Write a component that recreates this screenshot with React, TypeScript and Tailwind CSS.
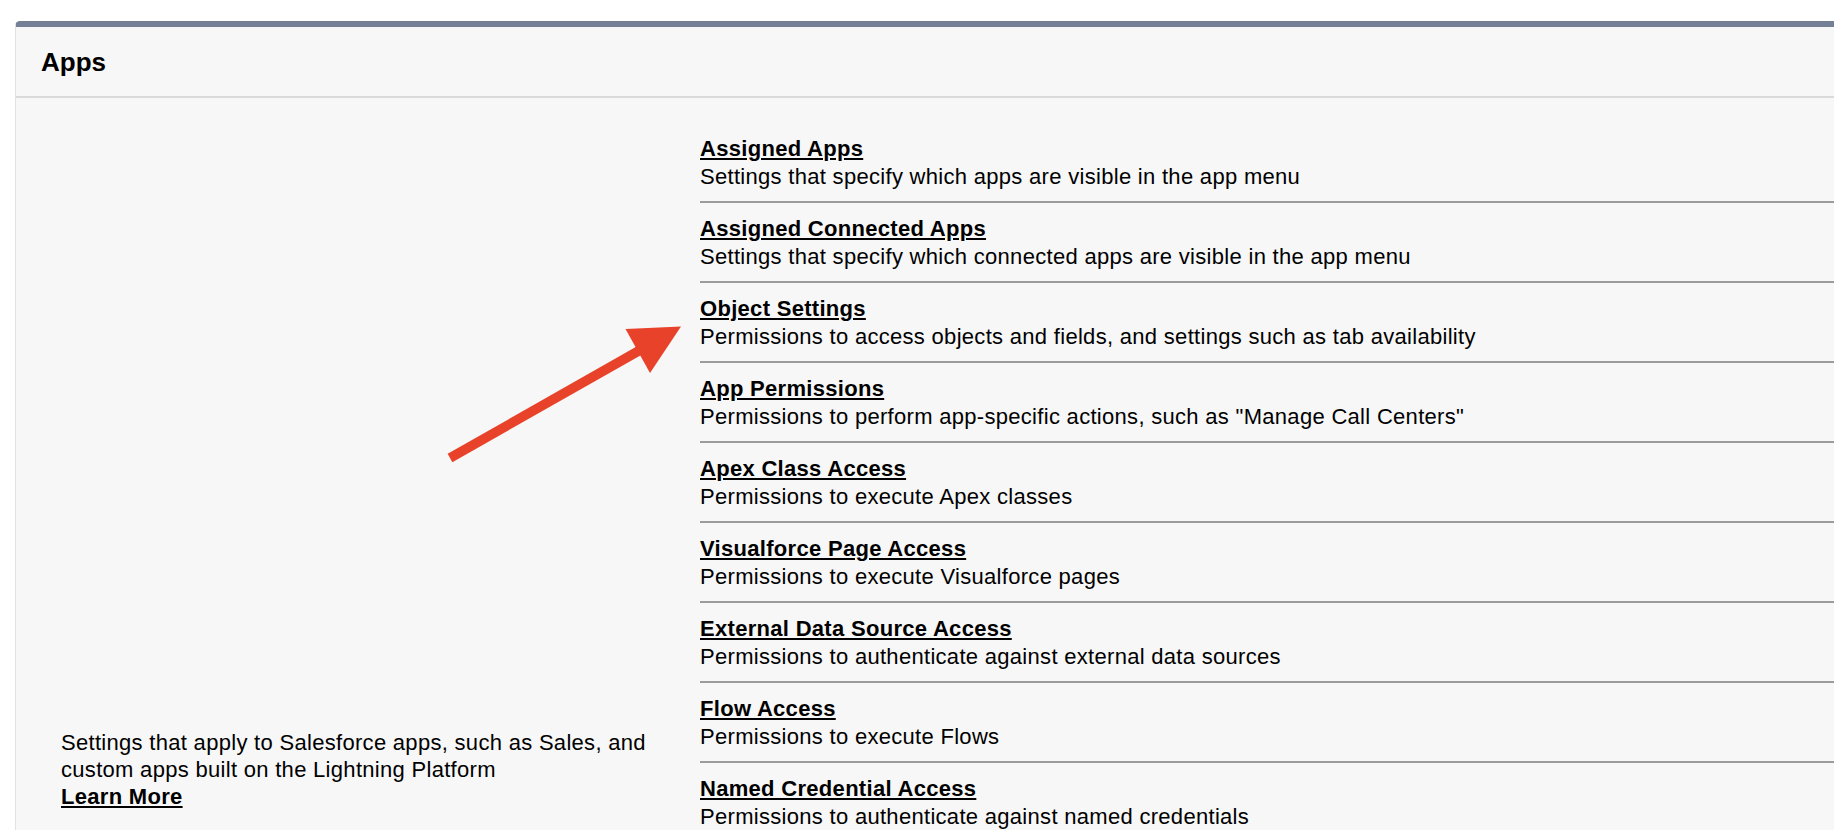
import React from "react";

const items: { title: string; desc: string }[] = [
  { title: "Assigned Apps", desc: "Settings that specify which apps are visible in the app menu" },
  { title: "Assigned Connected Apps", desc: "Settings that specify which connected apps are visible in the app menu" },
  { title: "Object Settings", desc: "Permissions to access objects and fields, and settings such as tab availability" },
  { title: "App Permissions", desc: "Permissions to perform app-specific actions, such as \"Manage Call Centers\"" },
  { title: "Apex Class Access", desc: "Permissions to execute Apex classes" },
  { title: "Visualforce Page Access", desc: "Permissions to execute Visualforce pages" },
  { title: "External Data Source Access", desc: "Permissions to authenticate against external data sources" },
  { title: "Flow Access", desc: "Permissions to execute Flows" },
  { title: "Named Credential Access", desc: "Permissions to authenticate against named credentials" },
];

export default function App() {
  return (
    <div
      className="relative w-full h-screen overflow-hidden bg-white text-black"
      style={{ fontFamily: '"Liberation Sans", Arial, Helvetica, sans-serif' }}
    >
      <div className="ml-[15px] mt-[21px] rounded-tl-[5px] border-t-[6px] border-l border-t-[#757f95] border-l-[#e2e2e2] bg-[#f7f7f7]">
        <div className="h-[71px] flex items-center pl-[25px] border-b-2 border-[#dadada]">
          <h2 className="text-[26px] leading-[30px] font-bold">Apps</h2>
        </div>
        <div className="flex">
          <div className="w-[684px] shrink-0 pl-[45px] pr-[30px] pt-[631px] text-[22px] leading-[27px] tracking-[0.3px]">
            <p>
              Settings that apply to Salesforce apps, such as Sales, and custom apps built on the Lightning Platform
            </p>
            <a href="#" className="font-bold underline">
              Learn More
            </a>
          </div>
          <div className="flex-1 pt-[25px]">
            {items.map((it) => (
              <div
                key={it.title}
                className="pt-[13px] pb-[11px] border-b-2 border-[#9b9b9b] text-[22px] leading-[26px] tracking-[0.3px]"
              >
                <a href="#" className="block font-bold underline">
                  {it.title}
                </a>
                <div className="mt-[2px]">{it.desc}</div>
              </div>
            ))}
          </div>
        </div>
      </div>
      <svg
        className="absolute left-0 top-0 pointer-events-none"
        width="1834"
        height="830"
        viewBox="0 0 1834 830"
      >
        <line x1="450" y1="458" x2="642" y2="349" stroke="#e8432a" strokeWidth="9.5" />
        <polygon points="625.5,329 681,326.5 650,373" fill="#e8432a" />
      </svg>
    </div>
  );
}
